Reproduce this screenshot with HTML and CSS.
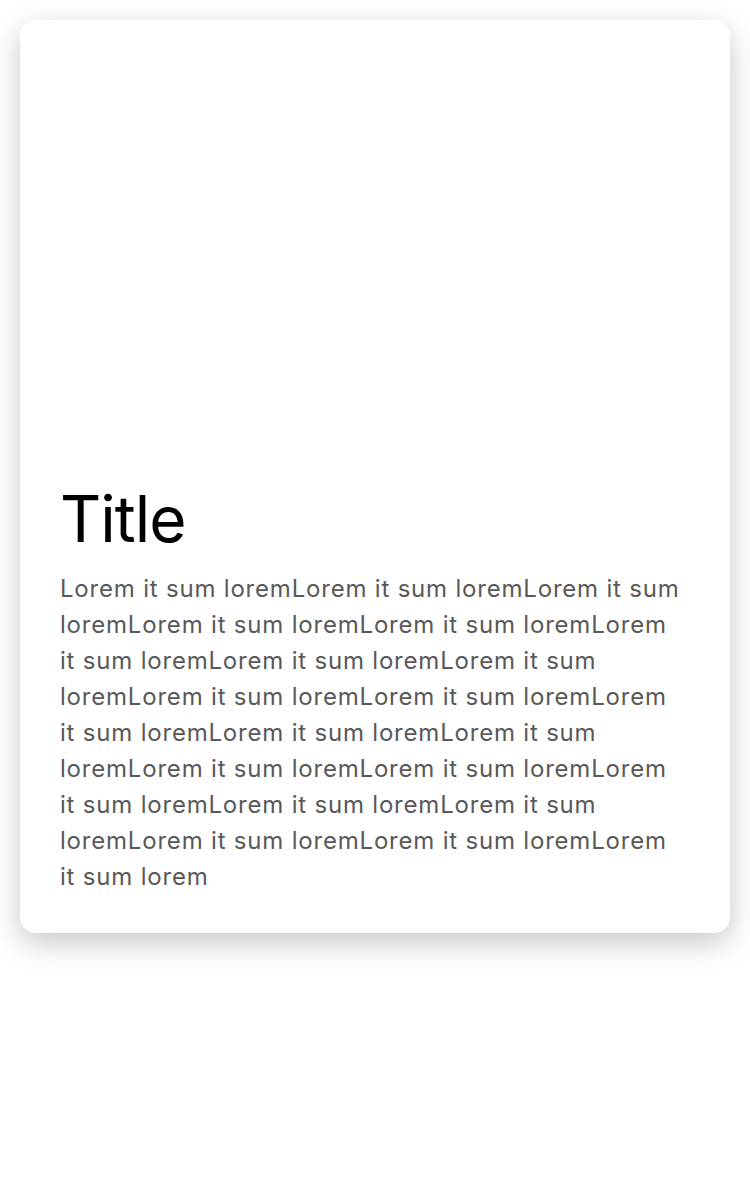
FILE: index.html
```html
<!DOCTYPE html>
<html>
<head>
<meta charset="utf-8">
<link rel="stylesheet" href="styles.css">
</head>
<body>
<div class="page">
  <div class="card">
    <div class="media"></div>
    <div class="content">
      <h1 class="title">Title</h1>
      <p class="text">Lorem it sum loremLorem it sum loremLorem it sum loremLorem it sum loremLorem it sum loremLorem it sum loremLorem it sum loremLorem it sum loremLorem it sum loremLorem it sum loremLorem it sum loremLorem it sum loremLorem it sum loremLorem it sum loremLorem it sum loremLorem it sum loremLorem it sum loremLorem it sum loremLorem it sum loremLorem it sum loremLorem it sum lorem</p>
    </div>
  </div>
</div>
</body>
</html>
```
FILE: styles.css
```css
html, body {
  margin: 0;
  padding: 0;
  background: #ffffff;
  font-family: Inter, "Noto Sans", sans-serif;
}
body {
  min-height: 1200px;
}
.page {
  padding: 20px;
}
.card {
  background: #ffffff;
  border-radius: 16px;
  box-shadow: 0 10px 30px rgba(0, 0, 0, 0.22);
  display: flex;
  flex-direction: column;
}
.media {
  height: 460px;
}
.content {
  padding: 0 46px 38px 40px;
}
.title {
  margin: 0;
  font-size: 64px;
  font-weight: 400;
  line-height: 78px;
  letter-spacing: -1px;
  color: #000;
}
.text {
  margin: 13px 0 0;
  font-size: 24px;
  line-height: 36px;
  letter-spacing: 0.8px;
  color: #595959;
}
```
